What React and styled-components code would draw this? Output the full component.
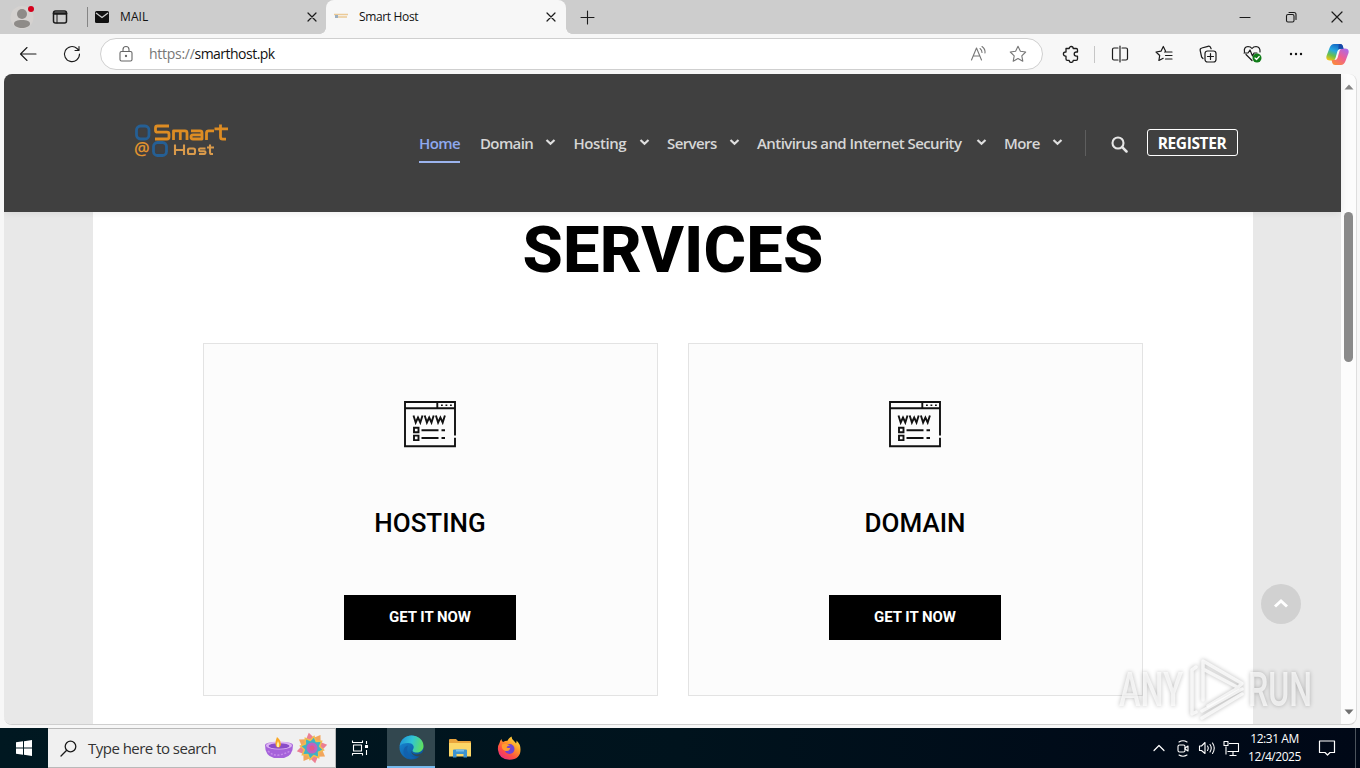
import React from "react"
import styled, { createGlobalStyle } from "styled-components"

const GlobalStyle = createGlobalStyle`
  * {
    box-sizing: border-box;
  }
  body {
    margin: 0;
    overflow: hidden;
    font-family: "Open Sans", "Noto Sans", sans-serif;
  }
  svg {
    display: block;
    flex: none;
  }
`

const Screen = styled.div`
  width: 1360px;
  height: 768px;
  display: flex;
  flex-direction: column;
  background: #f7f7f7;
  overflow: hidden;
`

/* ---------- browser ---------- */

const TabStrip = styled.div`
  height: 34px;
  display: flex;
  background: #cdcdcd;
`

const StripTools = styled.div`
  width: 88px;
  display: flex;
  align-items: center;
  padding-left: 10px;
  gap: 17px;
  border-right: 1px solid #858585;
  background-clip: padding-box;
  height: 20px;
  margin-top: 7px;
`

const Tab = styled.div`
  position: relative;
  width: ${(props) => props.$width}px;
  height: 34px;
  display: flex;
  align-items: center;
  padding: 0 ${(props) => (props.$active ? 10.5 : 9.5)}px 0 7px;
  border-radius: 8px 8px 0 0;
  background: ${(props) => (props.$active ? "#f7f7f7" : "transparent")};
  color: #111;
  font-size: 12px;

  .title {
    flex: 1;
    margin: -1px 0 0 ${(props) => (props.$active ? 10 : 11)}px;
    letter-spacing: ${(props) => props.$spacing}px;
  }

  /* flared feet of the selected tab */
  &::before,
  &::after {
    content: "";
    display: ${(props) => (props.$active ? "block" : "none")};
    position: absolute;
    bottom: 0;
    width: 6px;
    height: 6px;
  }
  &::before {
    left: -6px;
    background: radial-gradient(circle at 0 0, transparent 5.5px, #f7f7f7 6px);
  }
  &::after {
    right: -6px;
    background: radial-gradient(circle at 100% 0, transparent 5.5px, #f7f7f7 6px);
  }
`

const NewTab = styled.div`
  width: 42px;
  display: flex;
  align-items: center;
  justify-content: center;
`

const WindowButtons = styled.div`
  display: flex;
  align-items: center;
  margin-left: auto;

  svg {
    margin: 0 17px;
  }
`

const Toolbar = styled.div`
  height: 40px;
  display: flex;
  align-items: center;
  padding-left: 6px;
`

const ToolButton = styled.div`
  width: ${(props) => props.$width || 44}px;
  height: 40px;
  display: flex;
  align-items: center;
  justify-content: center;
`

const ToolDivider = styled.div`
  width: 1px;
  height: 17px;
  margin: 0 2px 0 1px;
  background: #c6c6c6;
`

const AddressBar = styled.div`
  width: 943px;
  height: 32px;
  margin: 0 6px;
  padding: 0 15px 0 16px;
  display: flex;
  align-items: center;
  border: 1px solid #cfcfcf;
  border-radius: 16px;
  background: #fff;
  font-size: 14px;
  color: #111;

  .url {
    flex: 1;
    margin: -1px 0 0 14px;
    letter-spacing: -0.52px;
  }
  .scheme {
    color: #777;
    letter-spacing: -0.28px;
  }
`

const Viewport = styled.div`
  width: 1353px;
  height: 651px;
  margin: 0 0 3px 4px;
  display: flex;
  border-radius: 8px;
  border-right: 1px solid #dedede;
  border-bottom: 1px solid #cfcfcf;
  background: #fcfcfc;
  overflow: hidden;
`

const Page = styled.div`
  width: 1337px;
  background: #e8e8e8;
`

const Scrollbar = styled.div`
  flex: 1;
  display: flex;
  flex-direction: column;
  align-items: center;
  padding: 10px 0 9px;

  .thumb {
    width: 9px;
    height: 150px;
    margin: 122px 0 auto;
    border-radius: 5px;
    background: #8a8a8a;
  }
`

/* ---------- site ---------- */

const SiteHeader = styled.header`
  position: relative;
  height: 138px;
  padding-left: 130px;
  display: flex;
  align-items: center;
  background: #404040;
  box-shadow: 0 1px 8px rgba(0, 0, 0, 0.08);
`

const Nav = styled.nav`
  display: flex;
  align-items: center;
  gap: 17.5px;
  margin: 0 0 0 189px;
`

const NavItem = styled.div`
  width: ${(props) => props.$width}px;
  height: 40px;
  display: flex;
  align-items: center;
  justify-content: space-between;
  margin-right: ${(props) => (props.$active ? 2.5 : 0)}px;
  padding-top: 2px;
  border-bottom: 2px solid ${(props) => (props.$active ? "#9cb4ee" : "transparent")};
  color: ${(props) => (props.$active ? "#8ea9ee" : "#d6d6d6")};
  font-size: 15px;
  font-weight: 650;
  letter-spacing: ${(props) => props.$spacing}px;
  white-space: nowrap;
`

const HeaderTools = styled.div`
  display: flex;
  align-items: center;
  margin: 0 0 0 22px;
  padding-left: 25px;
  height: 26px;
  border-left: 1px solid #5e5e5e;
  position: relative;
`

const Register = styled.div`
  width: 91px;
  height: 27px;
  margin: -1px 0 0 19px;
  padding-top: 1px;
  display: flex;
  align-items: center;
  justify-content: center;
  border: 1px solid #fff;
  border-radius: 3px;
  color: #fff;
  font-size: 15.5px;
  font-weight: 700;
  letter-spacing: -0.4px;
`

const Content = styled.main`
  width: 1160px;
  height: 513px;
  margin-left: 89px;
  background: #fff;
  font-family: Roboto, sans-serif;
  color: #000;
`

const Heading = styled.h2`
  height: 131px;
  margin: 0;
  padding-top: 4px;
  font-size: 65px;
  line-height: 68px;
  font-weight: 800;
  text-align: center;
  letter-spacing: ${(props) => props.$spacing}px;
`

const Cards = styled.div`
  display: flex;
  justify-content: center;
  gap: 30px;
`

const Card = styled.section`
  width: 455px;
  height: 353px;
  padding: 56px 1px 0 0;
  display: flex;
  flex-direction: column;
  align-items: center;
  border: 1px solid #e3e3e3;
  background: #fcfcfc;

  h3 {
    margin: 59px 0 56px;
    font-size: 26px;
    line-height: 32px;
    font-weight: 500;
  }
`

const Button = styled.div`
  width: 172px;
  height: 45px;
  background: #000;
  color: #fff;
  font-size: 15px;
  line-height: 44px;
  font-weight: 700;
  text-align: center;
  letter-spacing: -0.04px;
`

const BackToTop = styled.div`
  position: absolute;
  left: 1261px;
  top: 584px;
  width: 40px;
  height: 40px;
  display: flex;
  align-items: center;
  justify-content: center;
  border-radius: 50%;
  background: #d1d1d1;
`

const Watermark = styled.svg`
  position: absolute;
  left: 1110px;
  top: 650px;
  overflow: visible;
  filter: drop-shadow(0 0 2px rgba(0, 0, 0, 0.36));
`

/* ---------- taskbar ---------- */

const Taskbar = styled.div`
  height: 40px;
  display: flex;
  background: linear-gradient(90deg, #001821 0%, #00131d 50%, #000a18 85%, #000817 100%);
  color: #fff;
`

const TaskButton = styled.div`
  width: ${(props) => props.$width || 48}px;
  display: flex;
  align-items: center;
  justify-content: center;
  background: ${(props) => (props.$active ? "#32474f" : "transparent")};
  border-bottom: ${(props) => (props.$active ? "2px solid #76b9ed" : "none")};
`

const SearchBox = styled.div`
  width: 288px;
  display: flex;
  align-items: center;
  padding: 0 7px 0 12px;
  border: 1px solid #b9b9b9;
  border-left: 0;
  background: #f0f0f0;
  color: #333;
  font-size: 15px;
  letter-spacing: -0.52px;

  .hint {
    flex: 1;
    margin-left: 11px;
  }
`

const Tray = styled.div`
  margin-left: auto;
  display: flex;
  align-items: center;

  .icons {
    display: flex;
    align-items: center;
    gap: 7px;
  }
`

const Clock = styled.div`
  width: 70px;
  padding-right: 1px;
  font-size: 12px;
  line-height: 18px;
  letter-spacing: -0.45px;
  text-align: center;
`

const ShowDesktop = styled.div`
  width: 5px;
  height: 40px;
  margin-left: 19px;
  border-left: 1px solid #4b535c;
`

/* ---------- drawings ---------- */

const Line = ({ w = 20, h = w, color = "#1b1b1b", weight = 1.1, children, ...rest }) => (
  <svg
    width={w}
    height={h}
    viewBox={`0 0 ${w} ${h}`}
    fill="none"
    stroke={color}
    strokeWidth={weight}
    strokeLinecap="round"
    strokeLinejoin="round"
    {...rest}
  >
    {children}
  </svg>
)

const Cross = ({ size = 8 }) => (
  <Line w={size + 2} weight={1.2}>
    <path d={`M1 1L${size + 1} ${size + 1}M${size + 1} 1L1 ${size + 1}`} />
  </Line>
)

const Profile = () => (
  <svg width="25" height="24" viewBox="0 0 25 24">
    <circle cx="12" cy="12.500" r="11.500" fill="#d5d2d0" />
    <circle cx="12" cy="9" r="5" fill="#8e8b88" />
    <path d="M4 19c0-3 3-4 8-4s8 1 8 4c0 2-4 4-8 4s-8-2-8-4z" fill="#8e8b88" />
    <circle cx="21" cy="4" r="3" fill="#d5001c" />
  </svg>
)

const NavChevron = () => (
  <Line w={11} h={8} color="#dedede" weight={2.2} strokeLinecap="butt" strokeLinejoin="miter">
    <path d="M1.500 1L5.500 4.800L9.500 1" />
  </Line>
)

const SiteLogo = () => (
  <svg width="96" height="43" viewBox="0 0 96 43">
    <g fill="none" stroke="#255f94">
      <rect x="2.500" y="4" width="12.500" height="13" rx="4" strokeWidth="2.800" />
      <rect x="19.500" y="20.500" width="13" height="13" rx="4" strokeWidth="2.800" />
      <rect x="5" y="6.500" width="7.500" height="8" rx="2" stroke="#393f49" strokeWidth="1" />
      <rect x="22" y="23" width="8" height="8" rx="2" stroke="#393f49" strokeWidth="1" />
    </g>
    <g fill="none" stroke="#dd8c23" strokeWidth="2.800" strokeLinejoin="round">
      <path d="M35 4H23.500q-2 0-2 2v2.200q0 2 2 2H33q2 0 2 2v2.800q0 2-2 2H21" />
      <path d="M39.500 18V8.800H51q2 0 2 2V18M46.300 9v9" />
      <path d="M57 8.800H66q2 0 2 2V17H59q-2 0-2-2v0q0-2.200 2-2.200h9" />
      <path d="M72.500 18V11q0-2.200 2.200-2.200H80" />
      <path d="M86.500 2.500V15q0 2.200 2.200 2.200H92M80.500 6.800H94" />
    </g>
    <g fill="none" stroke="#d99a4b" strokeWidth="2.100" strokeLinejoin="round">
      <path d="M41 22.500v10.500M50 22.500v10.500M41 28h9" />
      <rect x="54" y="26.500" width="7" height="5.500" rx="1.500" />
      <path d="M71.500 26.500H66q-1 0-1 1.300t1 1.400h4.500q1 0 1 1.400T70.500 32H65" />
      <path d="M76 22.500v8q0 1.500 1.500 1.500H79M73 25.500h7" />
    </g>
    <text x="0" y="32.500" fontFamily="Open Sans" fontWeight="600" fontSize="17.500" fill="#e0922f">
      @
    </text>
  </svg>
)

const WebsiteIcon = () => (
  <svg width="54" height="48" viewBox="0 0 54 48" fill="none" stroke="#111" strokeWidth="1.900">
    <path d="M52 35.500V2H2v44.200h50v-8.500M2 8.200h50M34.300 2v6" />
    <path d="M38 5.200h1.800M42.500 5.200h1.800M47 5.200h1.800" strokeWidth="1.600" />
    <path
      d="M10.500 15.500l2.200 7 2.300-5 2.300 5 2.200-7M21.700 15.500l2.200 7 2.300-5 2.300 5 2.200-7M32.900 15.500l2.200 7 2.300-5 2.300 5 2.200-7"
      strokeWidth="1.900"
    />
    <path d="M11 27.800h4.500v4.500H11zM11 35.600h4.500v4.500H11z" />
    <path d="M18.500 30.200h17M38.500 30.200H42M18.500 38h17M38.500 38H42" />
  </svg>
)

const Copilot = () => (
  <svg width="23" height="23" viewBox="0 0 23 23">
    <defs>
      <linearGradient id="copilotLeft" x1="0.600" y1="0" x2="0.200" y2="1">
        <stop offset="0" stopColor="#1466c4" />
        <stop offset="0.400" stopColor="#26a9e1" />
        <stop offset="0.700" stopColor="#6cc04a" />
        <stop offset="1" stopColor="#f5c516" />
      </linearGradient>
      <linearGradient id="copilotRight" x1="0.900" y1="0" x2="0.200" y2="1">
        <stop offset="0" stopColor="#a66bf0" />
        <stop offset="0.500" stopColor="#ee5f93" />
        <stop offset="1" stopColor="#fb8a3a" />
      </linearGradient>
    </defs>
    <path
      d="M8 1h6q2 0 2.700 2l.7 3h-3.200q-2 0-2.700 2L9.500 15q-.7 2.500-2.500 2.500H4q-4.500 0-3.500-4.500L3.500 5Q5 1 8 1z"
      fill="url(#copilotLeft)"
    />
    <path
      d="M15 22H9q-2 0-2.700-2l-.7-3h3.200q2 0 2.700-2L13.500 8q.7-2.500 2.500-2.500h3q4.500 0 3.500 4.500l-3 8q-1.500 4-4.500 4z"
      fill="url(#copilotRight)"
    />
    <path d="M12.800 1h1.700q1.700 0 2.400 2l.7 2.800h-3.200q-1.400 0-2.100 1z" fill="#1749a8" />
  </svg>
)

const Diya = () => (
  <svg width="30" height="24" viewBox="0 0 30 24" style={{ marginRight: 2 }}>
    <path d="M1 9q0-3 14-3t14 3q0 11-9 13H10Q1 20 1 9z" fill="#a562da" />
    <ellipse cx="15" cy="9.500" rx="13" ry="4" fill="#dcb3f3" />
    <ellipse cx="15" cy="10" rx="10.500" ry="2.800" fill="#8a4cc8" />
    <path d="M13 1q5 4 3.500 9-2 3-4.500 0-1.500-3 1-9z" fill="#f9a825" />
    <path d="M14 5q2 3 1 6h-2q-1-2 1-6z" fill="#fff0a0" />
    <path d="M4 15q5 5 11 4t11-4" fill="none" stroke="#c68bea" strokeWidth="1.500" strokeDasharray="2 1.500" />
  </svg>
)

const petals = [0, 45, 90, 135, 180, 225, 270, 315]

const Rangoli = () => (
  <svg width="32" height="32" viewBox="-16 -16 32 32">
    {petals.map((angle) => (
      <path
        key={angle}
        transform={`rotate(${angle - 12})`}
        d="M0-15.500L4.500-9 0-4-4.500-9z"
        fill={angle % 90 ? "#f2a65c" : "#ec7f92"}
      />
    ))}
    {petals.map((angle) => (
      <path key={angle} transform={`rotate(${angle + 10})`} d="M0-13L3.500-8 0 0-3.500-8z" fill="#f1bd4e" />
    ))}
    {petals.map((angle) => (
      <path key={angle} transform={`rotate(${angle + 10})`} d="M0-10.500L3.500-5 0 0-3.500-5z" fill="#3fb2c4" />
    ))}
    <circle r="5.500" fill="#bd62c1" />
    <circle r="2.500" fill="#e0588a" />
  </svg>
)

const EdgeLogo = () => (
  <svg width="25" height="25" viewBox="0 0 25 25">
    <defs>
      <linearGradient id="edgeTop" x1="0" y1="0.300" x2="1" y2="0.500">
        <stop offset="0" stopColor="#2095d8" />
        <stop offset="0.500" stopColor="#31c5d4" />
        <stop offset="1" stopColor="#60df5d" />
      </linearGradient>
      <linearGradient id="edgeLow" x1="0" y1="0" x2="0.800" y2="1">
        <stop offset="0" stopColor="#198ed9" />
        <stop offset="1" stopColor="#0b5099" />
      </linearGradient>
    </defs>
    <circle cx="12.500" cy="12.500" r="12" fill="url(#edgeLow)" />
    <path
      d="M.7 11C2 4 7 .5 12.500.500 19 .5 24.500 5 24.500 11c0 4-3 6.500-6.500 6.500-4 0-5-1.500-4-3 2-3 0-6.500-5-6.500-4 0-7 1-8.300 3z"
      fill="url(#edgeTop)"
    />
    <path d="M9 10.500c-3 7 3 12.500 8 12-6 3.500-13-1-12.500-6.500.2-3 2-5 4.500-5.500z" fill="#1261ad" />
    <path d="M12.500 15.500c0 4 6 5.500 11 2h1.500v2l-2 1.500c-5 1.500-11.500-1-10.500-5.500z" fill="#32474f" />
  </svg>
)

const Explorer = () => (
  <svg width="22" height="19" viewBox="0 0 22 19">
    <path d="M0 1q0-1 1-1h6l2 2h12q1 0 1 1v14H0z" fill="#e9a43c" />
    <path d="M0 4h22v13.500H0z" fill="#fcd768" />
    <path d="M4 18.500v-7q0-1 1-1h12q1 0 1 1v7h-3.500V15h-7v3.500z" fill="#3d93d0" />
    <path d="M7 10.500h8v2H7z" fill="#78bde8" />
  </svg>
)

const Firefox = () => (
  <svg width="24" height="24" viewBox="0 0 24 24">
    <defs>
      <linearGradient id="fox" x1="0.900" y1="0" x2="0.200" y2="1">
        <stop offset="0" stopColor="#fff04a" />
        <stop offset="0.400" stopColor="#ff9a28" />
        <stop offset="0.700" stopColor="#ff4f41" />
        <stop offset="1" stopColor="#e72a84" />
      </linearGradient>
    </defs>
    <path
      d="M2.500 7Q3 4.500 4.500 3q0 2 1.500 3 2-1.300 4.500-1.300Q11.500 2 14.500.5q0 3 3 5 1 1 1.500 2 .8-1.500.5-3 4 3.500 4 9 0 10-11 10.200Q2 23.500 1 14 .5 10 2.500 7z"
      fill="url(#fox)"
    />
    <circle cx="12.500" cy="13" r="5" fill="#7144d2" />
    <path d="M5 8.500q4-2 8 1-3 0-3.500 2 3 1 4 0-1 4-5 3.500Q4 13.500 5 8.500z" fill="#ff9c2e" />
  </svg>
)

const links = [
  { label: "Home", width: 41, active: true, spacing: -0.6 },
  { label: "Domain", width: 76, spacing: -0.62 },
  { label: "Hosting", width: 76, spacing: -0.42 },
  { label: "Servers", width: 72.5, spacing: -0.58 },
  { label: "Antivirus and Internet Security", width: 229.5, spacing: -0.57 },
  { label: "More", width: 58.5, spacing: -0.58 },
]

const services = ["HOSTING", "DOMAIN"]

const BrowserTabs = () => (
  <TabStrip>
    <StripTools>
      <Profile />
      <Line w={16} weight={1.5}>
        <rect x="1.500" y="2" width="13" height="12" rx="2" />
        <path d="M2 4.500h12" strokeWidth="2.500" />
        <path d="M5 5v9" strokeWidth="1" />
      </Line>
    </StripTools>
    <Tab $width={238} $spacing={0.1}>
      <svg width="14" height="12" viewBox="0 0 14 12">
        <rect width="14" height="12" rx="1.500" fill="#111" />
        <path d="M1 2l6 4.500L13 2" fill="none" stroke="#cdcdcd" strokeWidth="1.300" />
      </svg>
      <div className="title">MAIL</div>
      <Cross />
    </Tab>
    <Tab $width={240} $active $spacing={-0.35}>
      <svg width="16" height="8" viewBox="0 0 16 8">
        <path d="M1 1.500h14M3 4h11" stroke="#ecca97" strokeWidth="1.500" />
        <path d="M2 2h3v3H2z" fill="#9cafc0" />
      </svg>
      <div className="title">Smart Host</div>
      <Cross />
    </Tab>
    <NewTab>
      <Line w={15}>
        <path d="M7.500 1v13M1 7.500h13" />
      </Line>
    </NewTab>
    <WindowButtons>
      <Line w={12}>
        <path d="M1 6.500h10" />
      </Line>
      <Line w={12}>
        <rect x="1.500" y="3.500" width="7.500" height="7.500" rx="1.500" />
        <path d="M4 1.500h5q2 0 2 2v5" />
      </Line>
      <Cross size={10} />
    </WindowButtons>
  </TabStrip>
)

const BrowserToolbar = () => (
  <Toolbar>
    <ToolButton>
      <Line w={18}>
        <path d="M17 9H1.500M8 2.500L1.500 9 8 15.500" />
      </Line>
    </ToolButton>
    <ToolButton>
      <Line w={18}>
        <path d="M16.500 9A7.500 7.500 0 1 1 14 3.500L16 5.500M16 1.500v4h-4" />
      </Line>
    </ToolButton>
    <AddressBar>
      <Line w={18} color="#666">
        <rect x="3" y="6.500" width="12" height="9.500" rx="1.500" />
        <path d="M6 6.500V4.500a3 3 0 0 1 6 0v2" />
        <circle cx="9" cy="11" r="0.600" fill="#666" />
      </Line>
      <div className="url">
        <span className="scheme">https://</span>smarthost.pk
      </div>
      <Line w={18} color="#777">
        <path d="M2.500 15L7.500 3l5 12M4.200 11h6.600M11 3.500q2 1.500 2 4M13 1.500q3.500 2.500 3 6.500" />
      </Line>
      <Line w={18} color="#777" style={{ marginLeft: 22 }}>
        <path d="M9 1.300l2.400 5 5.300.7-3.900 3.800 1 5.400L9 13.600l-4.800 2.600 1-5.400L1.300 7l5.300-.7z" />
      </Line>
    </AddressBar>
    <ToolButton>
      <Line w={18} weight={1.3}>
        <path d="M4 3.500h3.200a2 2 0 0 1 4 0h3q1.300 0 1.300 1.300V7h-1.200a2 2 0 0 0 0 4.200h1.200v2.900q0 1.300-1.300 1.300h-3a2 2 0 0 1-4 0H5.300Q4 15.400 4 14v-2.800H3.500a2 2 0 0 1 0-4.200H4z" />
      </Line>
    </ToolButton>
    <ToolDivider />
    <ToolButton $width={45}>
      <Line w={18} weight={1.2}>
        <path d="M7 3H3Q1.500 3 1.500 4.500v9Q1.500 15 3 15h4M11 3h4q1.500 0 1.500 1.500v9Q16.500 15 15 15h-4M9 1v16" />
      </Line>
    </ToolButton>
    <ToolButton>
      <Line w={18} weight={1.2}>
        <path d="M10.500 6L8.300 1.500 6 6.200 1 7l3.700 3.500-.8 5 4.300-2.200M9.500 7H17M10.500 10.500H17M10.500 14H17" />
      </Line>
    </ToolButton>
    <ToolButton>
      <Line w={18} weight={1.2}>
        <rect x="6" y="6" width="11" height="11" rx="2.500" />
        <path d="M11.500 8.500v6M8.500 11.500h6M4 13.500L2.600 12 1.200 5.500Q.8 3.500 2.800 3L9 1.300Q11 .8 11.800 3l.3.800" />
      </Line>
    </ToolButton>
    <ToolButton>
      <Line w={19} h={18} weight={1.2}>
        <path d="M1.500 7Q.5 2 5 1.500q2.500 0 4 2 1.500-2 4-2Q17.500 2 17 7M3 9.500l6 6M1 8h4l2-3 2.500 6L11 8h3" />
        <circle cx="14" cy="13" r="4.500" fill="#107c18" stroke="none" />
        <path d="M12 13l1.500 1.500 2.700-3" stroke="#fff" />
      </Line>
    </ToolButton>
    <ToolButton>
      <svg width="16" height="4" viewBox="0 0 16 4" fill="#111">
        <circle cx="3" cy="2" r="1.200" />
        <circle cx="8" cy="2" r="1.200" />
        <circle cx="13" cy="2" r="1.200" />
      </svg>
    </ToolButton>
    <ToolButton $width={39}>
      <Copilot />
    </ToolButton>
  </Toolbar>
)

const Site = () => (
  <Page>
    <SiteHeader>
      <SiteLogo />
      <Nav>
        {links.map((link) => (
          <NavItem key={link.label} $width={link.width} $active={link.active} $spacing={link.spacing}>
            {link.label}
            {!link.active && <NavChevron />}
          </NavItem>
        ))}
      </Nav>
      <HeaderTools>
        <Line w={17} color="#e6e6e6" weight={2.1} style={{ marginTop: 3 }}>
          <circle cx="7" cy="7" r="5.500" />
          <path d="M11.200 11.200L15.500 15.500" strokeWidth="2.500" />
        </Line>
        <Register>REGISTER</Register>
      </HeaderTools>
    </SiteHeader>
    <Content>
      <Heading $spacing={0.15}>SERVICES</Heading>
      <Cards>
        {services.map((service) => (
          <Card key={service}>
            <WebsiteIcon />
            <h3>{service}</h3>
            <Button>GET IT NOW</Button>
          </Card>
        ))}
      </Cards>
    </Content>
  </Page>
)

const WindowsTaskbar = () => (
  <Taskbar>
    <TaskButton>
      <svg width="16" height="16" viewBox="0 0 16 16" fill="#fff">
        <path d="M0 2.300l7-1v6.200H0zM8 1.200L16 0v7.500H8zM0 8.500h7v6.200l-7-1zM8 8.500h8V16l-8-1.200z" />
      </svg>
    </TaskButton>
    <SearchBox>
      <Line w={17} weight={1.3}>
        <circle cx="10.500" cy="6.500" r="5.300" />
        <path d="M6.700 10.300L1 16" />
      </Line>
      <div className="hint">Type here to search</div>
      <Diya />
      <Rangoli />
    </SearchBox>
    <TaskButton $width={51}>
      <Line w={18} color="#fff" style={{ marginRight: 4 }}>
        <path d="M1.500 1.500v2h10v-2M1.500 16.500v-2h10v2M2.500 6h8v6h-8zM15.500 2v3M15.500 11v5" strokeLinecap="butt" />
        <rect x="14.500" y="6.500" width="2" height="2" fill="#fff" />
      </Line>
    </TaskButton>
    <TaskButton $active>
      <EdgeLogo />
    </TaskButton>
    <TaskButton $width={49}>
      <Explorer />
    </TaskButton>
    <TaskButton $width={49}>
      <Firefox />
    </TaskButton>
    <Tray>
      <div className="icons">
        <Line w={14} color="#fff" weight={1.2} style={{ marginRight: 2 }}>
          <path d="M2 9.500l5-5 5 5" />
        </Line>
        <Line w={16} h={18} color="#fff">
          <rect x="3" y="6" width="7" height="7" rx="1.500" />
          <path d="M10 9l3-2v5l-3-2M4 3q4-2.500 8 0M4 16q4 2.500 8 0" />
        </Line>
        <Line w={18} h={16} color="#fff">
          <path d="M1.500 6v4.500h2l3.500 3v-11L3.500 6zM9.500 6q1.500 2 0 4.500M12 4.500q2.500 3.500 0 7.500M14.500 3q3.500 5 0 10.500" />
        </Line>
        <Line w={17} color="#fff">
          <path d="M6 3.500h9.500v8H4.500M10 12v3M6.500 15.500h7M3 6.500v8" strokeLinecap="butt" />
          <rect x="1" y="1.500" width="4" height="4" />
        </Line>
      </div>
      <Clock>
        <div>12:31 AM</div>
        <div>12/4/2025</div>
      </Clock>
      <Line w={18} color="#fff" weight={1.2} style={{ marginLeft: 8 }}>
        <path d="M1.500 2h15v11.500h-4.500L9.500 16 7 13.500H1.500z" />
      </Line>
      <ShowDesktop />
    </Tray>
  </Taskbar>
)

const App = () => (
  <Screen>
    <GlobalStyle />
    <BrowserTabs />
    <BrowserToolbar />
    <Viewport>
      <Site />
      <Scrollbar>
        <svg width="10" height="6" viewBox="0 0 10 6">
          <path d="M5 0.500L9.500 5.500H0.500z" fill="#858585" />
        </svg>
        <div className="thumb" />
        <svg width="10" height="6" viewBox="0 0 10 6">
          <path d="M5 5.500L9.500 0.500H0.500z" fill="#707070" />
        </svg>
      </Scrollbar>
    </Viewport>
    <WindowsTaskbar />
    <BackToTop>
      <Line w={16} h={12} color="#fff" weight={3} strokeLinecap="butt" strokeLinejoin="miter">
        <path d="M2 8.500l6-5.500 6 5.500" />
      </Line>
    </BackToTop>
    <Watermark width="240" height="74" viewBox="0 0 240 74">
      <g fill="#fff" fillOpacity="0.700" fontFamily="Roboto" fontWeight="500" fontSize="49">
        <text x="9" y="56" textLength="64" lengthAdjust="spacingAndGlyphs">
          ANY
        </text>
        <text x="138" y="56" textLength="64" lengthAdjust="spacingAndGlyphs">
          RUN
        </text>
      </g>
      <g fill="none" stroke="#fff" strokeOpacity="0.750" strokeWidth="3.500" strokeLinejoin="round" strokeLinecap="round">
        <path d="M93 50V11l39 22.500-4 4L93 19M128 38L98 56" />
        <path d="M86 17l-4 3v44l4-2M92 61l40-22M92 68l40-24" />
      </g>
    </Watermark>
  </Screen>
)

export default App
